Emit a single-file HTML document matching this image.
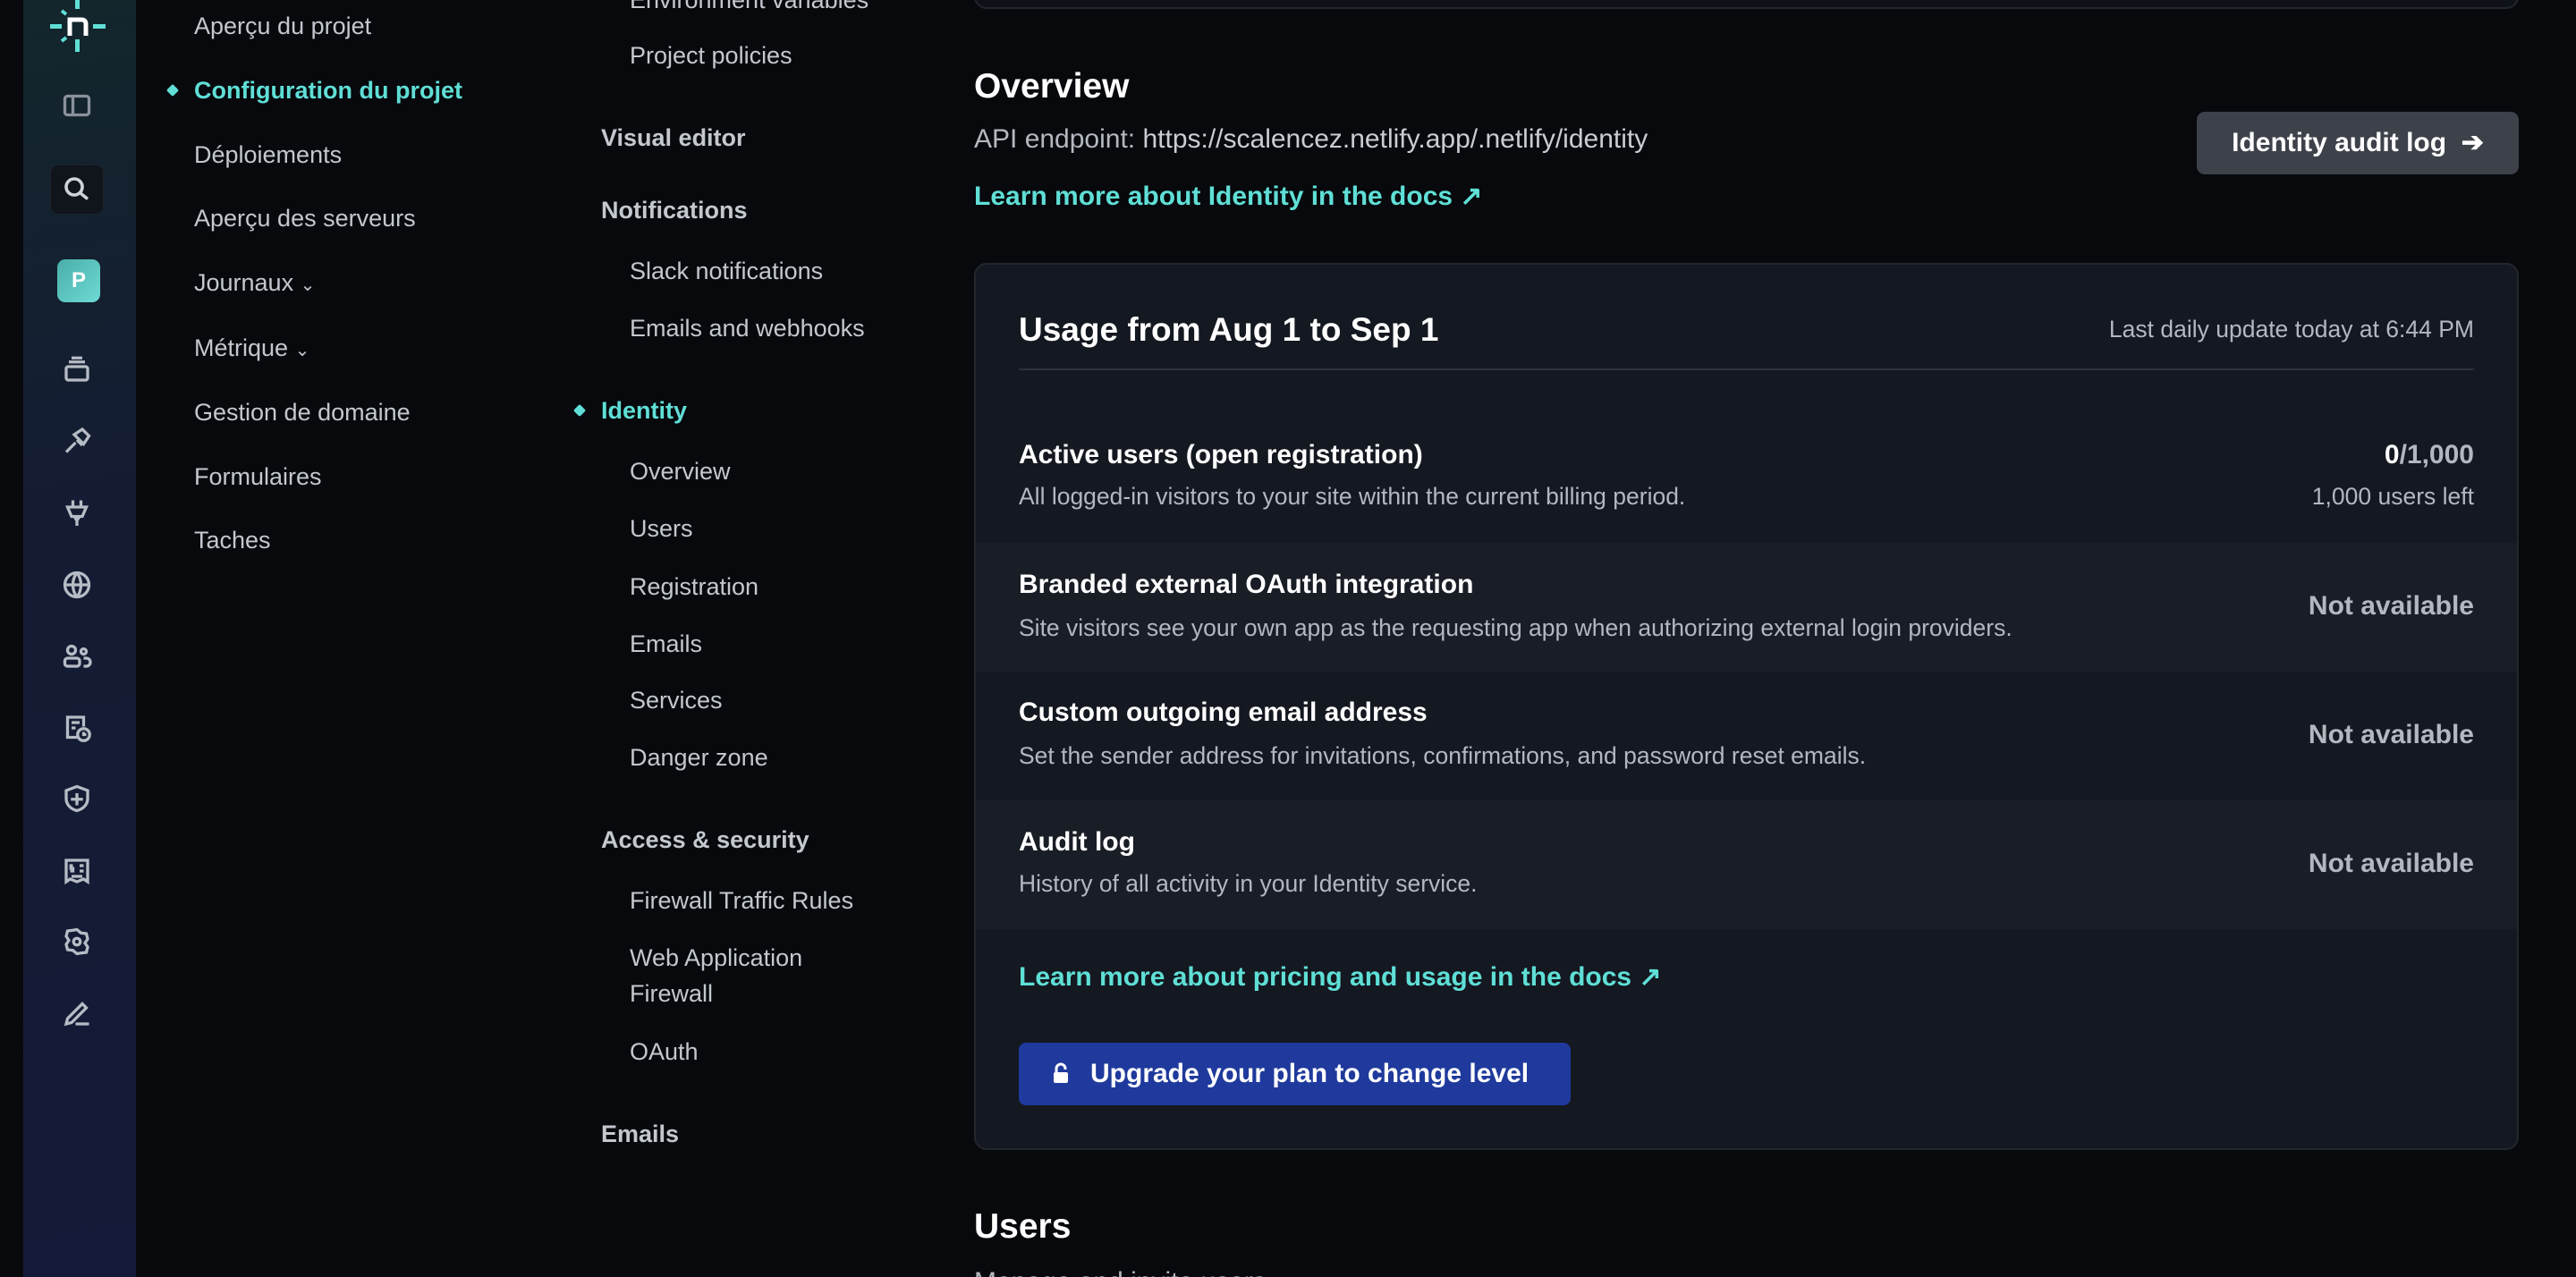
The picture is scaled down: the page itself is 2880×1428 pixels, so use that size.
<!DOCTYPE html>
<html><head><meta charset="utf-8">
<style>
*{margin:0;padding:0;box-sizing:border-box}
html,body{width:2880px;height:1428px;overflow:hidden;background:#07090d;font-family:"Liberation Sans",sans-serif;color:#c3c8cf}
#w{position:relative;width:2880px;height:1428px;overflow:hidden}
.a{position:absolute;white-space:nowrap;line-height:40px;height:40px}
.rail{position:absolute;left:26px;top:0;width:126px;height:1428px;background:linear-gradient(170deg,#13262c 0%,#141c33 40%,#141a37 100%)}
.ic{position:absolute;left:68px;width:36px;height:36px}
.n1{left:217px;font-size:27px;color:#c3c8cf}
.h2{left:672px;font-size:27px;font-weight:bold;color:#c3c8cf}
.s2{left:704px;font-size:27px;color:#c3c8cf}
.teal{color:#5fdfd6 !important}
.dot{position:absolute;width:10px;height:10px;background:#5fdfd6;transform:rotate(45deg);border-radius:2px}
.card{position:absolute;left:1089px;top:294px;width:1727px;height:992px;background:#141820;border:2px solid #22262d;border-radius:14px;overflow:hidden}
.row{position:absolute;left:0;width:100%}
.rt{position:absolute;left:48px;font-size:30px;font-weight:bold;color:#fff;line-height:40px;white-space:nowrap}
.rd{position:absolute;left:48px;font-size:26.5px;color:#b3b8c0;line-height:40px;white-space:nowrap}
.rr{position:absolute;right:48px;font-size:30px;font-weight:bold;color:#b3b8c0;line-height:40px;white-space:nowrap}
</style></head><body><div id="w">
<div class="rail"></div>
<svg style="position:absolute;left:56px;top:0" width="62" height="60" viewBox="0 0 62 60">
<rect x="28" y="0" width="5" height="10" fill="#5fdfd6"/><rect x="28" y="44" width="5" height="14" fill="#5fdfd6"/>
<rect x="0" y="27" width="13" height="5" fill="#5fdfd6"/><rect x="48" y="27" width="14" height="5" fill="#5fdfd6"/>
<path d="M13 12l5 4M13 46l5-4" stroke="#5fdfd6" stroke-width="4"/>
<path d="M22 40V22h13q5 0 5 5v13" stroke="#fff" stroke-width="5" fill="none"/>
</svg>
<svg class="ic" style="top:100px" viewBox="0 0 24 24" fill="none" stroke="#8a919c" stroke-width="2.2"><rect x="3" y="5" width="18" height="14" rx="2"/><path d="M9 5v14"/></svg>
<div style="position:absolute;left:56px;top:184px;width:60px;height:56px;background:#10141b;border:1px solid #1c222b;border-radius:9px"></div>
<svg class="ic" style="top:194px" viewBox="0 0 24 24" fill="none" stroke="#d0d4da" stroke-width="2.4"><circle cx="10" cy="10" r="6"/><path d="M15 15l5 4"/></svg>
<div style="position:absolute;left:64px;top:290px;width:48px;height:48px;border-radius:9px;background:linear-gradient(135deg,#4aaeaa,#6fdad4);color:#fff;font-weight:bold;font-size:24px;text-align:center;line-height:48px">P</div>
<svg class="ic" style="top:395px" viewBox="0 0 24 24" fill="none" stroke="#b6bcc5" stroke-width="2.2"><rect x="4" y="10" width="16" height="10" rx="1.5"/><path d="M6 6.5h12M8 3.5h8"/></svg>
<svg class="ic" style="top:474px" viewBox="0 0 24 24" fill="none" stroke="#b6bcc5" stroke-width="2.2"><path d="M4 21l7-7M10 8l6-4 5 5-4 6-7-7zM12 12l4 4"/></svg>
<svg class="ic" style="top:555px" viewBox="0 0 24 24" fill="none" stroke="#b6bcc5" stroke-width="2.2"><path d="M9 3v5M15 3v5M5 8h14l-3 7h-8zM10 15l2 3 2-3M12 18v4"/></svg>
<svg class="ic" style="top:636px" viewBox="0 0 24 24" fill="none" stroke="#b6bcc5" stroke-width="2.2"><circle cx="12" cy="12" r="9"/><path d="M3 12h18M12 3c-4 5-4 13 0 18M12 3c4 5 4 13 0 18"/></svg>
<svg class="ic" style="top:715px" viewBox="0 0 24 24" fill="none" stroke="#b6bcc5" stroke-width="2.2"><circle cx="8" cy="8" r="3"/><circle cx="17" cy="9" r="2"/><rect x="3" y="14" width="11" height="6" rx="2"/><path d="M17 14h2a2 2 0 010 6h-2"/></svg>
<svg class="ic" style="top:796px" viewBox="0 0 24 24" fill="none" stroke="#b6bcc5" stroke-width="2.2"><path d="M12 19H5V4h12v7"/><path d="M8 8h6M8 12h3"/><circle cx="17" cy="17" r="4.5"/><path d="M17 15v2h2"/></svg>
<svg class="ic" style="top:875px" viewBox="0 0 24 24" fill="none" stroke="#b6bcc5" stroke-width="2.2"><path d="M12 3l8 3v6c0 5-4 8-8 9-4-1-8-4-8-9V6z"/><path d="M12 8v9M7.5 12.5h9"/></svg>
<svg class="ic" style="top:956px" viewBox="0 0 24 24" fill="none" stroke="#b6bcc5" stroke-width="2.2"><path d="M4 4h16v16l-3-2-5 2-5-2-3 2z"/><path d="M9 8H7.5v2H9v2H7M14 8h3M14 12h3M8 16h8"/></svg>
<svg class="ic" style="top:1035px" viewBox="0 0 24 24" fill="none" stroke="#b6bcc5" stroke-width="2.2"><path d="M12 3l3 2.5 4 .5 1 4-2 3 2 3-1 4-4 .5L12 21l-3-2.5-4-.5-1-4 2-3-2-3 1-4 4-.5z"/><circle cx="12" cy="12" r="2.5"/></svg>
<svg class="ic" style="top:1115px" viewBox="0 0 24 24" fill="none" stroke="#b6bcc5" stroke-width="2.2"><path d="M4 20l1-4L16 5l3 3L8 19zM11 20h10"/></svg>

<div class="a n1" style="top:9px">Aperçu du projet</div>
<div class="dot" style="left:188px;top:96px"></div>
<div class="a n1 teal" style="top:81px;font-weight:bold">Configuration du projet</div>
<div class="a n1" style="top:153px">Déploiements</div>
<div class="a n1" style="top:224px">Aperçu des serveurs</div>
<div class="a n1" style="top:296px">Journaux <span style="font-size:20px">&#8964;</span></div>
<div class="a n1" style="top:369px">Métrique <span style="font-size:20px">&#8964;</span></div>
<div class="a n1" style="top:441px">Gestion de domaine</div>
<div class="a n1" style="top:513px">Formulaires</div>
<div class="a n1" style="top:584px">Taches</div>

<div class="a s2" style="top:-20px">Environment variables</div>
<div class="a s2" style="top:42px">Project policies</div>
<div class="a h2" style="top:134px">Visual editor</div>
<div class="a h2" style="top:215px">Notifications</div>
<div class="a s2" style="top:283px">Slack notifications</div>
<div class="a s2" style="top:347px">Emails and webhooks</div>
<div class="dot" style="left:643px;top:454px"></div>
<div class="a h2 teal" style="top:439px">Identity</div>
<div class="a s2" style="top:507px">Overview</div>
<div class="a s2" style="top:571px">Users</div>
<div class="a s2" style="top:636px">Registration</div>
<div class="a s2" style="top:700px">Emails</div>
<div class="a s2" style="top:763px">Services</div>
<div class="a s2" style="top:827px">Danger zone</div>
<div class="a h2" style="top:919px">Access &amp; security</div>
<div class="a s2" style="top:987px">Firewall Traffic Rules</div>
<div class="a s2" style="top:1051px">Web Application</div>
<div class="a s2" style="top:1091px">Firewall</div>
<div class="a s2" style="top:1156px">OAuth</div>
<div class="a h2" style="top:1248px">Emails</div>

<div style="position:absolute;left:1089px;top:-20px;width:1727px;height:30px;background:#0e1117;border:2px solid #22262d;border-radius:14px"></div>
<div class="a" style="left:1089px;top:74px;height:46px;line-height:46px;font-size:39px;font-weight:bold;color:#fff">Overview</div>
<div class="a" style="left:1089px;top:136px;font-size:30px;color:#b3b8c0">API endpoint: <span style="color:#c9cdd3">https://scalencez.netlify.app/.netlify/identity</span></div>
<div class="a teal" style="left:1089px;top:200px;font-size:30px;font-weight:bold">Learn more about Identity in the docs ↗</div>
<div style="position:absolute;left:2456px;top:125px;width:360px;height:70px;background:#3d424a;border-radius:9px;color:#fff;font-size:30px;font-weight:bold;line-height:70px;text-align:center">Identity audit log &nbsp;➔</div>

<div class="card">
  <div class="rt" style="top:51px;font-size:37px;line-height:44px">Usage from Aug 1 to Sep 1</div>
  <div class="rr" style="top:52px;font-size:26.5px;font-weight:normal;color:#b3b8c0">Last daily update today at 6:44 PM</div>
  <div style="position:absolute;left:48px;right:48px;top:116px;height:2px;background:#2c3038"></div>
  <div class="row" style="top:163px;height:148px">
    <div class="rt" style="top:30px">Active users (open registration)</div>
    <div class="rd" style="top:76px">All logged-in visitors to your site within the current billing period.</div>
    <div class="rr" style="top:30px"><span style="color:#fff">0</span>/1,000</div>
    <div class="rr" style="top:76px;font-size:26.5px;font-weight:normal">1,000 users left</div>
  </div>
  <div class="row" style="top:311px;height:144px;background:#191d25">
    <div class="rt" style="top:27px">Branded external OAuth integration</div>
    <div class="rd" style="top:75px">Site visitors see your own app as the requesting app when authorizing external login providers.</div>
    <div class="rr" style="top:51px">Not available</div>
  </div>
  <div class="row" style="top:455px;height:144px">
    <div class="rt" style="top:26px">Custom outgoing email address</div>
    <div class="rd" style="top:74px">Set the sender address for invitations, confirmations, and password reset emails.</div>
    <div class="rr" style="top:51px">Not available</div>
  </div>
  <div class="row" style="top:599px;height:144px;background:#191d25">
    <div class="rt" style="top:27px">Audit log</div>
    <div class="rd" style="top:73px">History of all activity in your Identity service.</div>
    <div class="rr" style="top:51px">Not available</div>
  </div>
  <div class="rt teal" style="top:777px">Learn more about pricing and usage in the docs ↗</div>
  <div style="position:absolute;left:48px;top:870px;width:617px;height:70px;background:#1f3a9c;border-radius:8px;color:#fff;font-size:30px;font-weight:bold;line-height:70px;padding-left:80px">
    <svg style="position:absolute;left:38px;top:22px" width="18" height="24" viewBox="0 0 18 24"><path d="M4 11V7a5 5 0 0110 0v1" stroke="#fff" stroke-width="3" fill="none"/><rect x="1" y="11" width="16" height="12" rx="2" fill="#fff"/></svg>
    Upgrade your plan to change level</div>
</div>

<div class="a" style="left:1089px;top:1349px;height:46px;line-height:46px;font-size:39px;font-weight:bold;color:#fff">Users</div>
<div class="a" style="left:1089px;top:1414px;font-size:30px;color:#b3b8c0">Manage and invite users</div>
</div></body></html>
